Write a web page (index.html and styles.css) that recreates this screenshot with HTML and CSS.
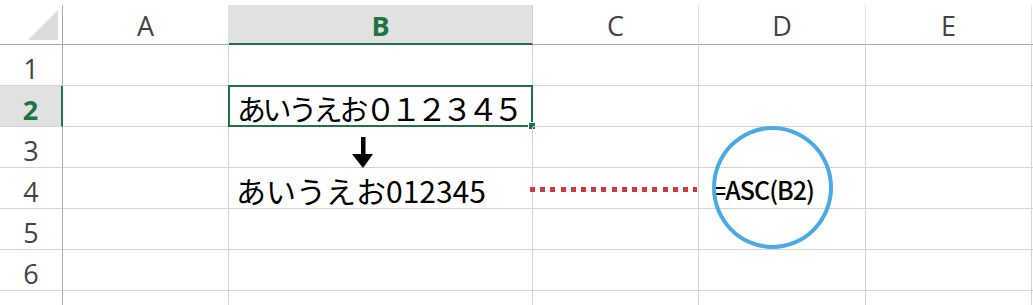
FILE: index.html
```html
<!DOCTYPE html>
<html lang="ja">
<head>
<meta charset="utf-8">
<title>ASC関数</title>
<link rel="stylesheet" href="styles.css">
</head>
<body>
<div class="sheet">
  <div class="grid">
    <div class="corner"></div>
    <div class="colh">A</div>
    <div class="colh sel">B</div>
    <div class="colh">C</div>
    <div class="colh">D</div>
    <div class="colh">E</div>
    <div class="colh last"></div>

    <div class="rowh">1</div>
    <div class="cell"></div><div class="cell"></div><div class="cell"></div><div class="cell"></div><div class="cell"></div><div class="cell last"></div>

    <div class="rowh sel">2</div>
    <div class="cell"></div>
    <div class="cell active"><span class="txt-full">あいうえお<span class="fw-digits">０１２３４５</span></span><span class="handle"></span></div>
    <div class="cell"></div><div class="cell"></div><div class="cell"></div><div class="cell last"></div>

    <div class="rowh">3</div>
    <div class="cell"></div><div class="cell"></div><div class="cell"></div><div class="cell"></div><div class="cell"></div><div class="cell last"></div>

    <div class="rowh">4</div>
    <div class="cell"></div>
    <div class="cell"><span class="txt-half">あいうえお012345</span></div>
    <div class="cell"></div>
    <div class="cell"><span class="formula">=ASC(B2)</span></div>
    <div class="cell"></div><div class="cell last"></div>

    <div class="rowh">5</div>
    <div class="cell"></div><div class="cell"></div><div class="cell"></div><div class="cell"></div><div class="cell"></div><div class="cell last"></div>

    <div class="rowh">6</div>
    <div class="cell"></div><div class="cell"></div><div class="cell"></div><div class="cell"></div><div class="cell"></div><div class="cell last"></div>

    <div class="rowh">7</div>
    <div class="cell"></div><div class="cell"></div><div class="cell"></div><div class="cell"></div><div class="cell"></div><div class="cell last"></div>
  </div>

  <svg class="arrow" width="22" height="32" viewBox="0 0 22 32">
    <rect x="9" y="0" width="4.5" height="19" fill="#000"/>
    <polygon points="0,17 21,17 11,31" fill="#000"/>
  </svg>
  <div class="dots"></div>
  <div class="ring"></div>
</div>
</body>
</html>
```

FILE: styles.css
```css
html, body {
  margin: 0;
  padding: 0;
  background: #ffffff;
}

.sheet {
  position: relative;
  width: 1033px;
  height: 305px;
  overflow: hidden;
  padding-top: 5px;
  box-sizing: border-box;
}

.grid {
  display: grid;
  grid-template-columns: 63px 166px 304px 166px 167px 166px 1fr;
  grid-template-rows: 40px repeat(7, 41px);
}

.grid > div {
  box-sizing: border-box;
}

.corner {
  position: relative;
  border-right: 1px solid #ababab;
  border-bottom: 1px solid #ababab;
}

.corner::after {
  content: "";
  position: absolute;
  left: 28px;
  top: 5px;
  width: 30px;
  height: 30px;
  background: #dcdcdc;
  clip-path: polygon(100% 0, 100% 100%, 0 100%);
}

.colh {
  display: flex;
  align-items: center;
  justify-content: center;
  font-family: "Open Sans", "Liberation Sans", sans-serif;
  font-size: 27px;
  color: #444444;
  border-right: 1px solid #e1e1e1;
  border-bottom: 1px solid #ababab;
  padding-top: 2px;
}

.colh.sel {
  background: #e1e1e1;
  color: #217346;
  font-weight: 700;
  border-bottom: 2px solid #217346;
  border-right-color: #d4d4d4;
}

.colh.last, .cell.last {
  border-right: none;
}

.rowh {
  display: flex;
  align-items: center;
  justify-content: center;
  font-family: "Open Sans", "Liberation Sans", sans-serif;
  font-size: 27px;
  color: #444444;
  border-right: 1px solid #ababab;
  border-bottom: 1px solid #d4d4d4;
  padding-top: 7px;
}

.rowh.sel {
  background: #e1e1e1;
  color: #217346;
  font-weight: 700;
  border-right: 2px solid #217346;
}

.cell {
  position: relative;
  display: flex;
  align-items: center;
  border-right: 1px solid #d4d4d4;
  border-bottom: 1px solid #d4d4d4;
  white-space: nowrap;
  font-family: "Noto Sans CJK JP", "Noto Sans", sans-serif;
  color: #000000;
}

.cell.active {
  border: 2px solid #217346;
  margin: -1px 0 0 -1px;
  padding-left: 7px;
}

.handle {
  position: absolute;
  right: -5px;
  bottom: -5px;
  width: 6px;
  height: 6px;
  background: #217346;
  border: 1px solid #ffffff;
}

.txt-full {
  font-size: 29px;
  letter-spacing: -3.4px;
  line-height: 1;
  padding-top: 3px;
}

.fw-digits {
  font-size: 31px;
  letter-spacing: -5.4px;
}

.txt-half {
  font-size: 30px;
  line-height: 1;
  padding-left: 7px;
  padding-top: 4px;
}

.formula {
  font-size: 25px;
  font-weight: 500;
  line-height: 1;
  letter-spacing: -1px;
  padding-left: 13px;
  padding-top: 2px;
}

.arrow {
  position: absolute;
  left: 352px;
  top: 137px;
}

.dots {
  position: absolute;
  left: 530px;
  top: 187px;
  width: 167px;
  height: 5px;
  background: repeating-linear-gradient(90deg, #d0383e 0 5px, transparent 5px 10.2px);
}

.ring {
  position: absolute;
  left: 712px;
  top: 126px;
  width: 121px;
  height: 123px;
  box-sizing: border-box;
  border: 4px solid #4aabe4;
  border-radius: 50%;
}
```
